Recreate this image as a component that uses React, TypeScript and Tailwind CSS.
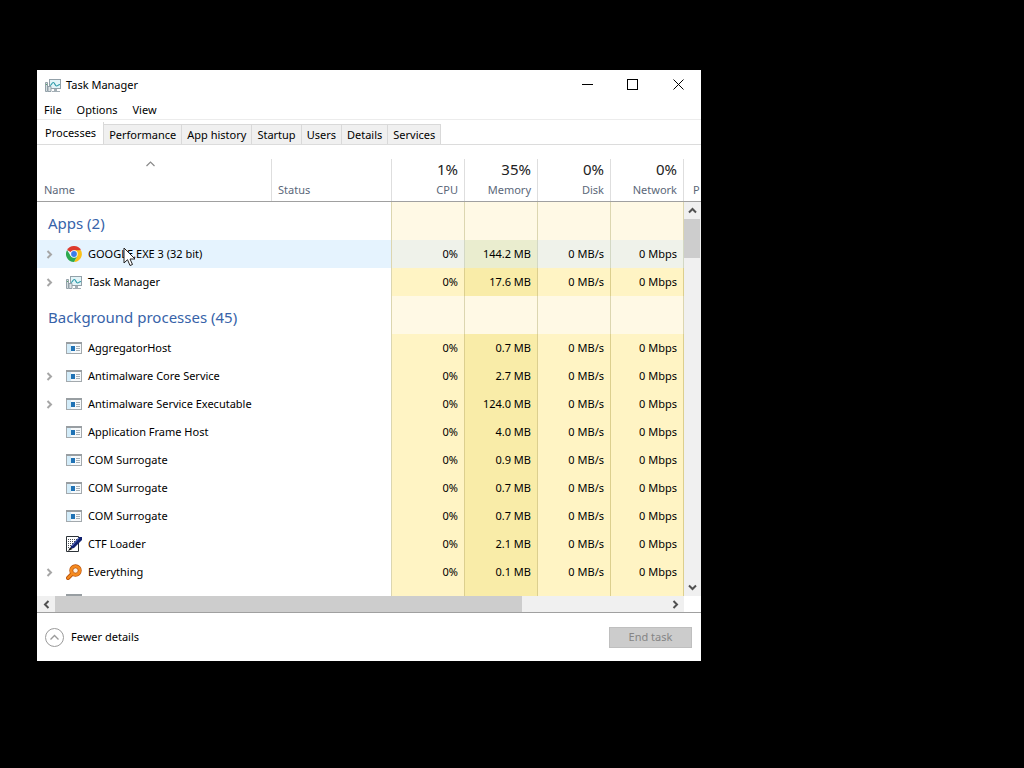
import { useState } from 'react';
import type { ReactNode } from 'react';
import { clsx } from 'clsx';

type IconKind = 'chrome' | 'taskmgr' | 'window' | 'ctf' | 'everything';

interface Process {
  id: number;
  name: string;
  icon: IconKind;
  memory: string;
  expandable?: boolean;
}

const apps: Process[] = [
  { id: 1, name: 'GOOGLE.EXE 3 (32 bit)', icon: 'chrome', memory: '144.2 MB', expandable: true },
  { id: 2, name: 'Task Manager', icon: 'taskmgr', memory: '17.6 MB', expandable: true },
];

const background: Process[] = [
  { id: 3, name: 'AggregatorHost', icon: 'window', memory: '0.7 MB' },
  { id: 4, name: 'Antimalware Core Service', icon: 'window', memory: '2.7 MB', expandable: true },
  { id: 5, name: 'Antimalware Service Executable', icon: 'window', memory: '124.0 MB', expandable: true },
  { id: 6, name: 'Application Frame Host', icon: 'window', memory: '4.0 MB' },
  { id: 7, name: 'COM Surrogate', icon: 'window', memory: '0.9 MB' },
  { id: 8, name: 'COM Surrogate', icon: 'window', memory: '0.7 MB' },
  { id: 9, name: 'COM Surrogate', icon: 'window', memory: '0.7 MB' },
  { id: 10, name: 'CTF Loader', icon: 'ctf', memory: '2.1 MB' },
  { id: 11, name: 'Everything', icon: 'everything', memory: '0.1 MB', expandable: true },
  { id: 12, name: '', icon: 'window', memory: '' },
];

const tabs = ['Processes', 'Performance', 'App history', 'Startup', 'Users', 'Details', 'Services'];

const usage = [
  { label: 'CPU', total: '1%' },
  { label: 'Memory', total: '35%' },
  { label: 'Disk', total: '0%' },
  { label: 'Network', total: '0%' },
];

function TaskManagerIcon() {
  return (
    <svg width="16" height="16" viewBox="0 0 16 16" fill="none">
      <rect x="4.5" y="2.500" width="11" height="9" fill="#e3f4f8" stroke="#93a1a9" />
      <path d="M5 8.500c1.500 0 1.800-3 3.300-3s1.700 3.500 3.200 3.500 1.500-1.500 3.500-1.500" stroke="#2b9aa8" strokeWidth="1.200" />
      <path d="M9 12h3v2H9zM7 14h8v1H7z" fill="#a3aeb5" />
      <path d="M.5 5.500h2v9h-2z" fill="#d5dde0" stroke="#93a1a9" />
      <path d="M3 9.500h3v5H3z" fill="#dfe5e8" stroke="#93a1a9" />
      <path d="M1 7.500h1" stroke="#5aa56c" />
    </svg>
  );
}

function ChromeIcon() {
  return (
    <svg width="16" height="16" viewBox="0 0 16 16">
      <path d="M8 8L1.070 4A8 8 0 0 1 14.930 4z" fill="#dd3b2e" />
      <path d="M8 4.200h6.930A8 8 0 0 1 8 16l3.300-6.100z" fill="#fbc116" />
      <path d="M4.700 9.900L1.070 4A8 8 0 0 0 8 16l3.300-6.100z" fill="#2da94f" />
      <circle cx="8" cy="8" r="3.700" fill="#fff" />
      <circle cx="8" cy="8" r="2.900" fill="#3b7de8" />
    </svg>
  );
}

function WindowIcon() {
  return (
    <svg width="16" height="12" viewBox="0 0 16 12">
      <rect x=".5" y=".5" width="15" height="11" fill="#f6f9fb" stroke="#a3a9ad" />
      <path d="M0 0h16v2H0z" fill="#989ea2" />
      <path d="M1 2h4v9H1z" fill="#d3ecf9" />
      <path d="M5 4h4v5H5z" fill="#1f72b5" />
      <path d="M10 4.500h4M10 6.500h4M10 8.500h4" stroke="#a5afb6" />
    </svg>
  );
}

function CtfIcon() {
  return (
    <svg width="16" height="16" viewBox="0 0 16 16">
      <path d="M.5 .5h12v15H.5z" fill="#fff" stroke="#2c3238" />
      <path
        d="M2 3.500h9M2 5.500h8M2 7.500h6M2 9.500h4M2 11.500h2"
        stroke="#4a5058"
        strokeDasharray="1 1"
      />
      <path d="M4 13l1-3L13 1h3v3l-8 8z" fill="#10206e" />
      <path d="M6 10l7-8" stroke="#5a72cc" />
      <path d="M2 15l2-3.500L6.500 13z" fill="#111" />
    </svg>
  );
}

function EverythingIcon() {
  return (
    <svg width="16" height="16" viewBox="0 0 16 16" fill="none">
      <path d="M6 10l-4 4" stroke="#b8520a" strokeWidth="4" strokeLinecap="round" />
      <circle cx="9.500" cy="6.500" r="4.200" stroke="#b8520a" strokeWidth="4" />
      <path d="M6 10l-4 4" stroke="#f58a1f" strokeWidth="2.400" strokeLinecap="round" />
      <circle cx="9.500" cy="6.500" r="4.200" stroke="#f58a1f" strokeWidth="2.800" />
      <circle cx="9.500" cy="6.500" r="2.500" fill="#fdf0e0" stroke="#b8520a" strokeWidth=".6" />
    </svg>
  );
}

const icons: Record<IconKind, ReactNode> = {
  chrome: <ChromeIcon />,
  taskmgr: <TaskManagerIcon />,
  window: <WindowIcon />,
  ctf: <CtfIcon />,
  everything: <EverythingIcon />,
};

function Chevron({ className }: { className?: string }) {
  return (
    <svg width="9" height="9" viewBox="0 0 9 9" fill="none" stroke="currentColor" className={className}>
      <path d="M1 6.500L4.500 3 8 6.500" strokeWidth="2" />
    </svg>
  );
}

function MouseCursor() {
  return (
    <svg width="13" height="20" viewBox="0 0 13 20" className="absolute left-[86px] top-[7px] pointer-events-none">
      <path d="M1 1v15l3.500-3.300L7 18.500l2.500-1L7 12h5z" fill="#fff" stroke="#222" />
    </svg>
  );
}

function GroupRow({ title }: { title: string }) {
  return (
    <tr className="h-[38px]">
      <th scope="rowgroup" className="pl-[11px] pt-1 text-left text-[15px] font-normal text-[#3763a9] whitespace-nowrap">
        {title}
      </th>
      <td className="border-r border-[#dcd6b0]" />
      {usage.map((u) => (
        <td key={u.label} className="border-r border-[#dcd6b0] bg-[#fff9e5]" />
      ))}
      <td />
    </tr>
  );
}

interface ProcessRowProps {
  process: Process;
  active: boolean;
  onSelect: () => void;
}

function ProcessRow({ process, active, onSelect }: ProcessRowProps) {
  const values = process.name ? ['0%', process.memory, '0 MB/s', '0 Mbps'] : ['', '', '', ''];

  return (
    <tr onClick={onSelect} className="h-7">
      <td className={clsx('relative p-0', active && 'bg-[#e5f3fe]')}>
        <div className="flex items-center pl-2">
          <span className="w-[21px]">
            {process.expandable && (
              <button aria-label={`Expand ${process.name}`} className="block">
                <Chevron className="rotate-90 text-[#a6a6a6]" />
              </button>
            )}
          </span>
          {icons[process.icon]}
          <span className="pl-[6px] whitespace-nowrap">{process.name}</span>
        </div>
        {process.id === 1 && <MouseCursor />}
      </td>
      <td className={clsx('border-r border-[#dcd6b0]', active && 'bg-[#e5f3fe]')} />
      {values.map((value, i) => (
        <td
          key={i}
          className={clsx(
            'border-r pr-[6px] text-right whitespace-nowrap',
            active ? 'border-[#d3d8c4]' : 'border-[#dccf8e]',
            i === 1 ? (active ? 'bg-[#eaedcf]' : 'bg-[#f9eca8]') : active ? 'bg-[#eff2ea]' : 'bg-[#fff4c4]',
          )}
        >
          {value}
        </td>
      ))}
      <td />
    </tr>
  );
}

export default function App() {
  const [activeTab, setActiveTab] = useState('Processes');
  const [selected, setSelected] = useState(1);

  return (
    <main className="min-h-screen bg-black pt-[70px] pl-[37px] font-['Noto_Sans',sans-serif] text-[11px] leading-4 text-black">
      <section className="w-full max-w-[664px] bg-white">
        {/* Title bar */}
        <header className="flex h-[30px] items-center pl-2">
          <TaskManagerIcon />
          <h1 className="flex-1 pl-[5px]">Task Manager</h1>
          <button aria-label="Minimize" className="flex h-[29px] w-[45px] items-center justify-center self-start">
            <svg width="11" height="11" stroke="#000"><path d="M0 5.500h11" /></svg>
          </button>
          <button aria-label="Maximize" className="flex h-[29px] w-[45px] items-center justify-center self-start">
            <svg width="11" height="11" stroke="#000" fill="none"><rect x=".5" y=".5" width="10" height="10" /></svg>
          </button>
          <button aria-label="Close" className="flex h-[29px] w-[46px] items-center justify-center self-start">
            <svg width="11" height="11" stroke="#000"><path d="M.5 .5l10 10M10.500 .5l-10 10" /></svg>
          </button>
        </header>

        {/* Menu */}
        <nav className="flex h-5 items-center gap-[15px] border-b border-[#ececec] pl-[7px]">
          <button>File</button>
          <button>Options</button>
          <button>View</button>
        </nav>

        {/* Tabs */}
        <div role="tablist" className="flex h-[25px] items-end border-b border-[#dcdcdc] pl-px">
          {tabs.map((tab) => (
            <button
              key={tab}
              role="tab"
              aria-selected={tab === activeTab}
              onClick={() => setActiveTab(tab)}
              className={clsx(
                'border-r border-[#d9d9d9] whitespace-nowrap',
                tab === activeTab ? 'h-[22px] bg-white px-[7px] pb-px' : 'h-5 border-t bg-[#f0f0f0] pr-[5px] pl-[5px]',
              )}
            >
              {tab}
            </button>
          ))}
        </div>

        {/* Process list */}
        <div className="relative h-[451px] overflow-hidden">
          <table className="w-full table-fixed border-separate border-spacing-0">
            <colgroup>
              <col />
              <col className="w-[120px]" />
              <col className="w-[73px]" />
              <col className="w-[73px]" />
              <col className="w-[73px]" />
              <col className="w-[73px]" />
              <col className="w-[17px]" />
            </colgroup>
            <thead className="text-[#5b6779]">
              <tr className="h-[57px] align-bottom">
                <th className="border-b border-[#a0a0a0] p-0 text-left font-normal">
                  <div className="flex h-[42px] flex-col border-r border-[#dedede] pt-[2px] pb-[3px] pl-[7px]">
                    <svg width="9" height="6" viewBox="0 0 9 6" fill="none" stroke="#8a8a8a" className="mr-[14px] self-center">
                      <path d="M.5 5l4-4 4 4" strokeWidth="1.200" />
                    </svg>
                    <span className="mt-auto">Name</span>
                  </div>
                </th>
                <th className="border-b border-[#a0a0a0] p-0 text-left font-normal">
                  <div className="flex h-[42px] items-end border-r border-[#dedede] pb-[3px] pl-[6px]">Status</div>
                </th>
                {usage.map((u) => (
                  <th key={u.label} className="border-b border-[#a0a0a0] p-0 text-right font-normal">
                    <div className="flex h-[42px] flex-col border-r border-[#dedede] pr-[6px] pb-[3px]">
                      <span className="text-[15px] leading-5 text-[#222]">{u.total}</span>
                      <span className="mt-auto">{u.label}</span>
                    </div>
                  </th>
                ))}
                <th className="border-b border-[#a0a0a0] p-0 pb-[3px] pl-[9px] text-left font-normal">P</th>
              </tr>
            </thead>
            <tbody>
              <GroupRow title="Apps (2)" />
              {apps.map((p) => (
                <ProcessRow key={p.id} process={p} active={p.id === selected} onSelect={() => setSelected(p.id)} />
              ))}
            </tbody>
            <tbody>
              <GroupRow title="Background processes (45)" />
              {background.map((p) => (
                <ProcessRow key={p.id} process={p} active={p.id === selected} onSelect={() => setSelected(p.id)} />
              ))}
            </tbody>
          </table>

          <div className="absolute top-[57px] right-0 bottom-0 flex w-[17px] flex-col bg-[#f0f0f0] pr-px text-[#505050]">
            <button aria-label="Scroll up" className="flex h-[17px] items-center justify-center">
              <Chevron />
            </button>
            <div className="h-[39px] bg-[#cdcdcd]" />
            <button aria-label="Scroll down" className="mt-auto flex h-[17px] items-center justify-center">
              <Chevron className="rotate-180" />
            </button>
          </div>
        </div>

        {/* Horizontal scrollbar */}
        <div className="border-b border-[#a0a0a0] pr-[17px]">
          <div className="flex h-4 bg-[#f0f0f0] text-[#505050]">
            <button aria-label="Scroll left" className="flex w-[18px] items-center justify-center">
              <Chevron className="-rotate-90" />
            </button>
            <div className="w-[467px] bg-[#cdcdcd]" />
            <button aria-label="Scroll right" className="ml-auto flex w-[17px] items-center justify-center">
              <Chevron className="rotate-90" />
            </button>
          </div>
        </div>

        {/* Footer */}
        <footer className="flex h-12 items-center justify-between pr-[9px] pl-2">
          <button className="flex items-center gap-[7px]">
            <svg width="19" height="19" viewBox="0 0 19 19" fill="none" stroke="#9a9a9a">
              <circle cx="9.500" cy="9.500" r="9" />
              <path d="M5.500 11.500l4-4 4 4" strokeWidth="1.300" />
            </svg>
            Fewer details
          </button>
          <button disabled className="h-[21px] w-[83px] border border-[#bfbfbf] bg-[#cccccc] text-[#858585]">
            End task
          </button>
        </footer>
      </section>
    </main>
  );
}
